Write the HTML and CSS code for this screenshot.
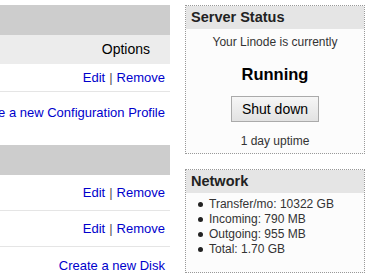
FILE: index.html
```html
<!DOCTYPE html>
<html lang="en">
<head>
  <meta charset="UTF-8">
  <meta name="viewport" content="width=device-width, initial-scale=1.0">
  <title>Linode Dashboard</title>
  <link rel="stylesheet" href="styles.css">
</head>
<body>
  <div class="page">
    <!-- Configuration profiles and disks -->
    <div class="main">
      <div class="section">
        <div class="section-title"></div>
        <div class="table-head">Options</div>
        <div class="row"><a href="#">Edit</a><span class="sep">|</span><a href="#">Remove</a></div>
        <div class="create create-config"><a href="#">Create a new Configuration Profile</a></div>
      </div>

      <div class="section">
        <div class="section-title"></div>
        <div class="row row-tall"><a href="#">Edit</a><span class="sep">|</span><a href="#">Remove</a></div>
        <div class="row row-tall"><a href="#">Edit</a><span class="sep">|</span><a href="#">Remove</a></div>
        <div class="create create-disk"><a href="#">Create a new Disk</a></div>
      </div>
    </div>

    <!-- Sidebar -->
    <div class="sidebar">
      <div class="box">
        <h3 class="box-title">Server Status</h3>
        <div class="status">
          <p class="status-line">Your Linode is currently</p>
          <p class="status-state">Running</p>
          <button type="button" class="button">Shut down</button>
          <p class="status-uptime">1 day uptime</p>
        </div>
      </div>

      <div class="box box-network">
        <h3 class="box-title">Network</h3>
        <ul class="net-list">
          <li>Transfer/mo: 10322 GB</li>
          <li>Incoming: 790 MB</li>
          <li>Outgoing: 955 MB</li>
          <li>Total: 1.70 GB</li>
        </ul>
      </div>
    </div>
  </div>
</body>
</html>
```

FILE: styles.css
```css
body {
  margin: 0;
  font-family: "Liberation Sans", Arial, sans-serif;
  color: #333;
  background-color: #fff;
}
a {
  color: #0000cc;
  text-decoration: none;
}
.page {
  display: flex;
  gap: 15px;
  padding-top: 5px;
}

/* left column */
.main {
  width: 170px;
  flex-shrink: 0;
  overflow: hidden;
  font-size: 13px;
}
.section-title {
  height: 30px;
  background-color: #cdcdcd;
}
.table-head {
  height: 29px;
  line-height: 29px;
  background-color: #ececec;
  color: #000;
  font-size: 14px;
  text-align: right;
  padding-right: 20px;
}
.row {
  display: flex;
  justify-content: flex-end;
  align-items: center;
  height: 27px;
  padding-right: 5px;
  border-bottom: 1px solid #e5e5e5;
}
.row-tall {
  height: 35px;
}
.sep {
  color: #555;
  margin: 0 4px;
}
.create {
  display: flex;
  justify-content: flex-end;
  white-space: nowrap;
  line-height: 18px;
  padding-right: 5px;
}
.create-config {
  padding-top: 12px;
  padding-bottom: 23px;
}
.create-disk {
  padding-top: 10px;
}

/* sidebar */
.sidebar {
  width: 180px;
  flex-shrink: 0;
}
.box {
  border: 1px dotted #999;
  background-color: #fcfcfc;
}
.box-network {
  margin-top: 15px;
  min-height: 102px;
}
.box-title {
  margin: 0;
  height: 23px;
  line-height: 23px;
  padding-left: 5px;
  background-color: #e5e5e5;
  color: #222;
  font-size: 14.5px;
}
.status {
  text-align: center;
  font-size: 12px;
  padding-bottom: 4px;
}
.status p {
  margin: 0;
}
.status-line {
  padding-top: 5px;
  line-height: 16px;
}
.status-state {
  margin-top: 14px !important;
  line-height: 20px;
  font-size: 16.5px;
  font-weight: bold;
  color: #000;
}
.button {
  margin-top: 12px;
  width: 88px;
  height: 26px;
  border: 1px solid #aaa;
  background: linear-gradient(#f6f6f6, #e2e2e2);
  font-family: "Liberation Sans", Arial, sans-serif;
  font-size: 14px;
  color: #000;
  padding: 0;
  cursor: pointer;
}
.status-uptime {
  margin-top: 11px !important;
  line-height: 16px;
}
.net-list {
  list-style: none;
  margin: 4px 0 0;
  padding-left: 23px;
  font-size: 12px;
  line-height: 15px;
}
.net-list li {
  position: relative;
}
.net-list li::before {
  content: "";
  position: absolute;
  left: -11px;
  top: 5px;
  width: 5px;
  height: 5px;
  border-radius: 50%;
  background-color: #222;
}
```
